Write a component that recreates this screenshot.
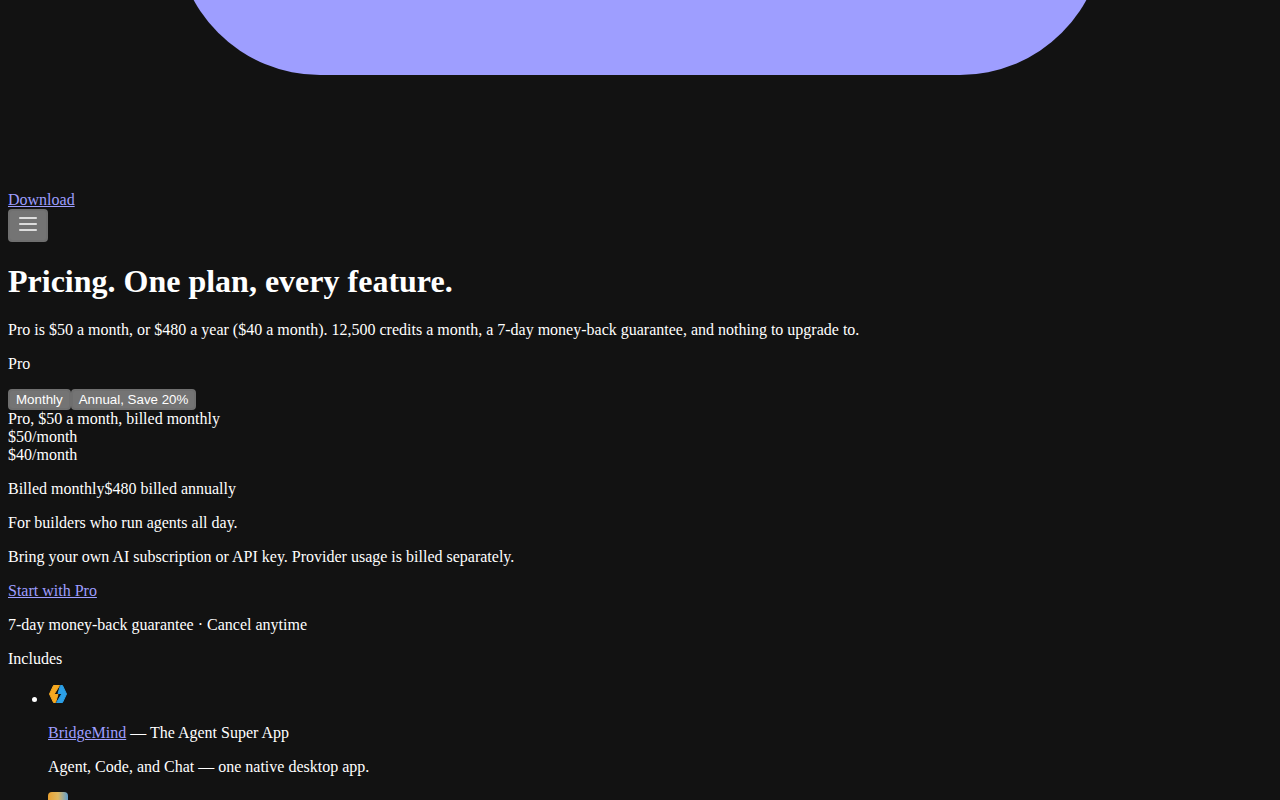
<div class="page">
  <div class="mark"><div class="mark-shape"></div></div>
  <div class="spacer"></div>
  <a href="#download">Download</a>
  <div>
    <button class="menu" aria-label="Menu">
      <svg width="24" height="24" viewBox="0 0 24 24" fill="none" stroke="currentColor" stroke-width="1.5" stroke-linecap="round"><path d="M3.750 6h16.500M3.750 12h16.500M3.750 18h16.500"/></svg>
    </button>
  </div>
  <h1>Pricing. One plan, every feature.</h1>
  <p>Pro is $50 a month, or $480 a year ($40 a month). 12,500 credits a month, a 7-day money-back guarantee, and nothing to upgrade to.</p>
  <p>Pro</p>
  <div><button>Monthly</button><button>Annual, Save 20%</button></div>
  <div>Pro, $50 a month, billed monthly</div>
  <div>$50/month</div>
  <div>$40/month</div>
  <p>Billed monthly$480 billed annually</p>
  <p>For builders who run agents all day.</p>
  <p>Bring your own AI subscription or API key. Provider usage is billed separately.</p>
  <p><a href="#start">Start with Pro</a></p>
  <p>7-day money-back guarantee · Cancel anytime</p>
  <p>Includes</p>
  <ul>
    <li>
      <svg class="icon" width="20" height="20" viewBox="0 0 20 20">
        <g stroke-width="1" stroke-linejoin="round">
          <path d="M5.500 1.500H11.500L6 10.500H10L7.500 18.500H5.500L1.500 10Z" fill="#f5a820" stroke="#f5a820"/>
          <path d="M5.500 1.500H11.500L6 10.500H10L7.500 18.500H5.500L1.500 10Z" fill="#2b9fe6" stroke="#2b9fe6" transform="rotate(180 10 10)"/>
        </g>
      </svg>
      <p><a href="#bm">BridgeMind</a> — The Agent Super App</p>
      <p>Agent, Code, and Chat — one native desktop app.</p>
    </li>
    <li>
      <svg class="icon" width="20" height="20" viewBox="0 0 20 20">
        <defs><linearGradient id="g2" x1="0" y1="0" x2="1" y2="0"><stop offset="0" stop-color="#e8a030"/><stop offset="0.5" stop-color="#e0b860"/><stop offset="1" stop-color="#5f9fd0"/></linearGradient></defs>
        <rect width="20" height="20" rx="4" fill="url(#g2)"/>
      </svg>
    </li>
  </ul>
</div>

<style>
  :global(html) { color-scheme: dark; }
  :global(body) { font-family: "Liberation Serif", serif; }
  .page { padding: 0 8px; }
  .mark { height: 75px; margin: 0 -8px; overflow: hidden; display: flex; justify-content: center; align-items: flex-end; }
  .mark-shape { flex: none; width: 928px; height: 400px; background: #9e9eff; border-radius: 0 0 144px 144px; }
  .spacer { height: 115.6px; }
  h1 { font-size: 32px; margin: 21.44px 0; }
  button { background: #747474; border: 2px solid #6f6f6f; border-radius: 4px; color: #fff; }
  .icon { display: inline; }
</style>
